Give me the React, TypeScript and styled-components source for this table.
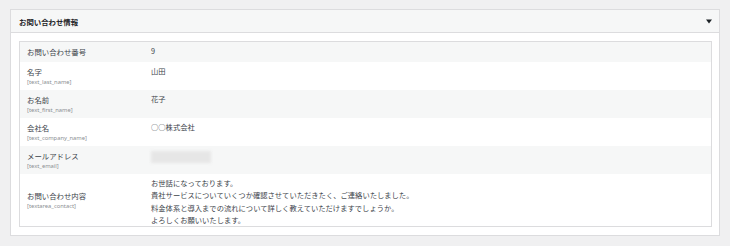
import styled, { createGlobalStyle } from "styled-components";

const GlobalStyle = createGlobalStyle`
  html, body {
    margin: 0;
    padding: 0;
    background: #f0f0f1;
    font-family: "Noto Sans CJK JP", "Noto Sans", sans-serif;
    color: #3c434a;
  }
`;

const Page = styled.div`
  padding: 9px 10px 10px 10px;
`;

const Panel = styled.div`
  background: #ffffff;
  border: 1px solid #dcdcde;
`;

const PanelHeader = styled.div`
  display: flex;
  align-items: center;
  justify-content: space-between;
  height: 22px;
  padding: 0 7px 0 8px;
  background: #f6f7f7;
  border-bottom: 1px solid #dcdcde;
`;

const PanelTitle = styled.h2`
  margin: 0;
  font-size: 7.4px;
  font-weight: 700;
  color: #1d2327;
`;

const ToggleArrow = styled.svg`
  width: 6px;
  height: 5px;
  display: block;
`;

const PanelBody = styled.div`
  padding: 8px 7px 8px 8px;
`;

const Table = styled.div`
  border: 1px solid #dcdcde;
  display: flex;
  flex-direction: column;
`;

const Row = styled.div<{ $striped?: boolean }>`
  display: grid;
  grid-template-columns: 131px 1fr;
  background: ${(p) => (p.$striped ? "#f6f7f7" : "#ffffff")};
`;

const LabelCell = styled.div`
  align-self: center;
  padding: 4px 7px;
  display: flex;
  flex-direction: column;
`;

const Label = styled.span`
  font-size: 7.4px;
  line-height: 12px;
  color: #3c434a;
`;

const FieldName = styled.span`
  font-family: "Noto Sans", sans-serif;
  font-size: 5.8px;
  line-height: 8px;
  color: #8c8f94;
`;

const ValueCell = styled.div`
  padding: 3px 8px 0 0;
  font-size: 7.3px;
  line-height: 12.3px;
  color: #3c434a;
  white-space: pre-line;
`;

const Blurred = styled.div`
  width: 60px;
  height: 12px;
  margin-top: 2px;
  background: #e6e6e6;
  filter: blur(1.5px);
`;

type Field = {
  label: string;
  name?: string;
  value?: string;
  hidden?: boolean;
};

const fields: Field[] = [
  { label: "お問い合わせ番号", value: "9" },
  { label: "名字", name: "[text_last_name]", value: "山田" },
  { label: "お名前", name: "[text_first_name]", value: "花子" },
  { label: "会社名", name: "[text_company_name]", value: "○○株式会社" },
  { label: "メールアドレス", name: "[text_email]", hidden: true },
  {
    label: "お問い合わせ内容",
    name: "[textarea_contact]",
    value:
      "お世話になっております。\n貴社サービスについていくつか確認させていただきたく、ご連絡いたしました。\n料金体系と導入までの流れについて詳しく教えていただけますでしょうか。\nよろしくお願いいたします。",
  },
];

const App = () => {
  return (
    <Page>
      <GlobalStyle />
      <Panel>
        <PanelHeader>
          <PanelTitle>お問い合わせ情報</PanelTitle>
          <ToggleArrow viewBox="0 0 6 5">
            <path d="M0 0.5 H6 L3 4.5 Z" fill="#1d2327" />
          </ToggleArrow>
        </PanelHeader>
        <PanelBody>
          <Table>
            {fields.map((f, i) => (
              <Row key={f.label} $striped={i % 2 === 0}>
                <LabelCell>
                  <Label>{f.label}</Label>
                  {f.name && <FieldName>{f.name}</FieldName>}
                </LabelCell>
                <ValueCell>{f.hidden ? <Blurred /> : f.value}</ValueCell>
              </Row>
            ))}
          </Table>
        </PanelBody>
      </Panel>
    </Page>
  );
};

export default App;
